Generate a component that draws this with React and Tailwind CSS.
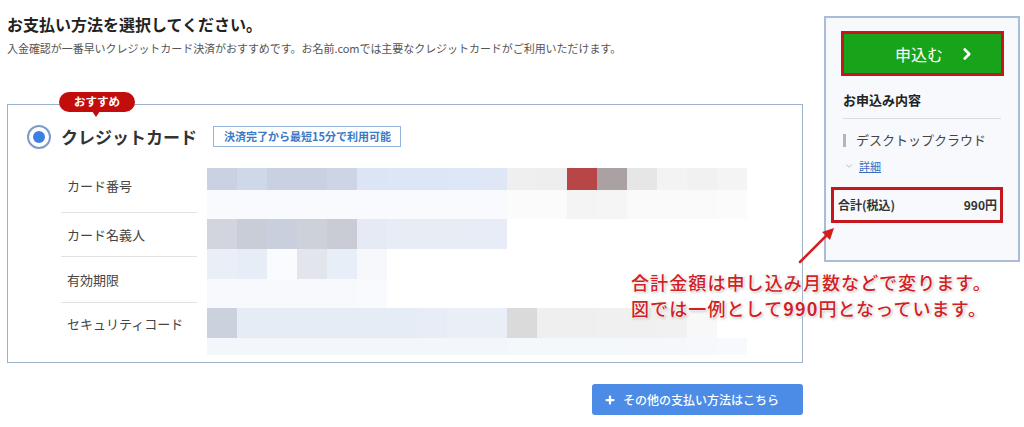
import React from "react";
import { ChevronRight, ChevronDown, Plus } from "lucide-react";

const rowHeights = ["h-[22px]", "h-[29px]", "h-[30px]", "h-[30px]", "h-[29px]", "h-[30px]", "h-[17px]"];

const W = "bg-white";
const mosaic = [
  ["bg-[#c9d1e2]", "bg-[#cfd8e9]", "bg-[#c8d0e2]", "bg-[#c9d0e2]", "bg-[#ccd4e5]", "bg-[#dce5f5]", "bg-[#dde6f6]", "bg-[#dde6f6]", "bg-[#dee7f7]", "bg-[#dfe7f6]", "bg-[#efefef]", "bg-[#eeeeee]", "bg-[#b94646]", "bg-[#aaa2a2]", "bg-[#e6e6e6]", "bg-[#f3f3f3]", "bg-[#f1f1f1]", "bg-[#f4f4f4]"],
  ["bg-[#f9fafd]", "bg-[#f9fafd]", "bg-[#f9fafd]", "bg-[#f9fafd]", "bg-[#f9fafd]", "bg-[#f9fafd]", "bg-[#f9fafd]", "bg-[#f9fafd]", "bg-[#f9fafd]", "bg-[#f9fafd]", "bg-[#fbfbfb]", "bg-[#fbfbfb]", "bg-[#f4f4f4]", "bg-[#f5f5f5]", "bg-[#fafafa]", "bg-[#fafafa]", "bg-[#fafafa]", "bg-[#fbfbfb]"],
  ["bg-[#d2d5de]", "bg-[#c9cdd8]", "bg-[#c9cfdc]", "bg-[#cdd1da]", "bg-[#c9ccd5]", "bg-[#e6eaf4]", "bg-[#e8ecf5]", "bg-[#e8ecf5]", "bg-[#e8ecf5]", "bg-[#e7ecf6]", W, W, W, W, W, W, W, W],
  ["bg-[#eaeef6]", "bg-[#e7edf7]", "bg-[#fafbfe]", "bg-[#e3e5ed]", "bg-[#e8eef7]", "bg-[#f6f8fc]", W, W, W, W, W, W, W, W, W, W, W, W],
  ["bg-[#f7f9fc]", "bg-[#f7f9fc]", "bg-[#f8f9fc]", "bg-[#f8f9fc]", "bg-[#f8f9fc]", "bg-[#f9fafd]", W, W, W, W, W, W, W, W, W, W, W, W],
  ["bg-[#ccd2dd]", "bg-[#e6ecf6]", "bg-[#e6ecf6]", "bg-[#e6ecf6]", "bg-[#e6ecf6]", "bg-[#e6ecf6]", "bg-[#e6ecf6]", "bg-[#e7ecf6]", "bg-[#e9eef7]", "bg-[#e9eef7]", "bg-[#dadada]", "bg-[#efefef]", "bg-[#efefef]", "bg-[#f0f0f0]", "bg-[#f0f0f0]", "bg-[#f1f1f1]", "bg-[#f8f8f8]", W],
  ["bg-[#f3f6fb]", "bg-[#f3f6fb]", "bg-[#f3f6fb]", "bg-[#f3f6fb]", "bg-[#f3f6fb]", "bg-[#f3f6fb]", "bg-[#f3f6fb]", "bg-[#f3f6fb]", "bg-[#f3f6fb]", "bg-[#f3f6fb]", "bg-[#f4f7fb]", "bg-[#f4f7fb]", "bg-[#f4f7fb]", "bg-[#f4f7fb]", "bg-[#f5f7fb]", "bg-[#f5f7fb]", "bg-[#f6f8fb]", "bg-[#f7f9fc]"],
];

const labels = [
  { text: "カード番号", h: "h-[53px]" },
  { text: "カード名義人", h: "h-[44px]" },
  { text: "有効期限", h: "h-[46px]" },
  { text: "セキュリティコード", h: "h-[42px]", last: true },
];

export default function App() {
  return (
    <div className="relative flex w-[1024px] h-[427px] bg-white overflow-hidden font-['Noto_Sans_CJK_JP','Noto_Sans',sans-serif] text-[#333]">
      {/* Left column */}
      <div className="w-[803px] pl-[7px] pt-[12px] flex flex-col">
        <h1 className="text-[16px] leading-[24px] font-bold text-[#222]">お支払い方法を選択してください。</h1>
        <p className="mt-[4px] text-[11px] leading-[16px] text-[#555] tracking-[-0.05px]">
          入金確認が一番早いクレジットカード決済がおすすめです。お名前.comでは主要なクレジットカードがご利用いただけます。
        </p>

        {/* Card */}
        <div className="relative mt-[48px] h-[259px] border border-[#9fb2cc] bg-white pt-[20px]">
          {/* Badge */}
          <div className="absolute left-[51px] top-[-13px] flex h-[20px] w-[76px] items-center justify-center rounded-full bg-[#c30d0d] text-[11.5px] font-bold text-white leading-none">
            おすすめ
            <span className="absolute left-[33px] top-[19px] h-0 w-0 border-x-[4px] border-t-[6px] border-x-transparent border-t-[#c30d0d]"></span>
          </div>

          {/* Header */}
          <div className="flex h-[23px] items-center pl-[19px]">
            <span className="flex h-[24px] w-[24px] items-center justify-center rounded-full border-2 border-[#7c9bcb] bg-white">
              <span className="h-[12px] w-[12px] rounded-full bg-[#3d80e3]"></span>
            </span>
            <span className="ml-[10px] text-[17px] font-bold text-[#333] leading-none">クレジットカード</span>
            <span className="ml-[16px] flex h-[21px] items-center border border-[#93b5de] pl-[10px] pr-[9px] text-[11px] font-bold text-[#3a7ac6] leading-none">
              決済完了から最短15分で利用可能
            </span>
          </div>

          {/* Rows */}
          <div className="mt-[12px] flex pl-[53px]">
            <div className="flex w-[136px] flex-col">
              {labels.map((l) => (
                <div
                  key={l.text}
                  className={`${l.h} flex items-center pl-[6px] text-[13px] text-[#444] ${l.last ? "" : "border-b border-[#e2e2e2]"}`}
                >
                  {l.text}
                </div>
              ))}
            </div>
            <div className="ml-[10px] flex flex-col pt-[8px]">
              {mosaic.map((row, i) => (
                <div key={i} className={`flex ${rowHeights[i]}`}>
                  {row.map((c, j) => (
                    <div key={j} className={`w-[30px] h-full ${c}`}></div>
                  ))}
                </div>
              ))}
            </div>
          </div>
        </div>

        {/* Other payment button */}
        <div className="mt-[21px] flex justify-end">
          <button className="flex h-[31px] w-[211px] items-center rounded-[3px] bg-[#4c8ce6] pl-[12px] text-[12px] font-medium text-white">
            <Plus size={12} strokeWidth={4.5} className="text-white" />
            <span className="ml-[7px] leading-none">その他の支払い方法はこちら</span>
          </button>
        </div>
      </div>

      {/* Right panel */}
      <div className="ml-[21px] mt-[16px] h-[246px] w-[196px] border-2 border-[#a9bcd8] bg-[#f7f9fc] pt-[13px]">
        <div className="px-[15px]">
          <button className="flex h-[45px] w-[163px] items-center justify-center border-[3px] border-[#c4161c] bg-[#17a41b] pl-[26px] text-white">
            <span className="text-[16px] leading-none">申込む</span>
            <ChevronRight size={18} strokeWidth={3.5} className="ml-[15px]" />
          </button>
          <div className="mt-[14px] pl-[2px] text-[13px] font-bold leading-[20px] text-[#222]">お申込み内容</div>
          <div className="mt-[8px] ml-[2px] h-px w-[158px] bg-[#dcdcdc]"></div>
          <div className="mt-[11px] flex items-center pl-[2px] leading-[20px]">
            <span className="h-[13px] w-[3px] bg-[#b5b5b5]"></span>
            <span className="ml-[10px] text-[13px] text-[#444]">デスクトップクラウド</span>
          </div>
          <div className="mt-[8px] flex items-center pl-[3px] leading-[16px]">
            <ChevronDown size={10} strokeWidth={1.5} className="text-[#999]" />
            <span className="ml-[5px] text-[11px] text-[#3b6fc4] underline">詳細</span>
          </div>
        </div>
        <div className="mt-[13px] ml-[5px] flex h-[36px] w-[172px] items-center justify-between border-[3px] border-[#c4161c] pl-[4px] pr-[3px] text-[12px] font-semibold text-[#333]">
          <span>合計(税込)</span>
          <span>990円</span>
        </div>
      </div>

      {/* Arrow annotation */}
      <svg className="absolute left-[795px] top-[222px]" width="45" height="45" viewBox="0 0 45 45">
        <line x1="5" y1="40" x2="32" y2="13" stroke="#d41f1f" strokeWidth="2.5" strokeLinecap="round" />
        <polygon points="39,6 35,18 27,10" fill="#d41f1f" />
      </svg>

      <div className="absolute left-[631px] top-[269px] text-[18px] leading-[26px] tracking-[1.1px] font-medium text-[#d11f26] [text-shadow:0_0_2px_#fff,0_0_2px_#fff,0_0_3px_#fff,1px_1px_3px_#999]">
        <div>合計金額は申し込み月数などで変ります。</div>
        <div>
          図では一例として<span className="font-bold">990</span>円となっています。
        </div>
      </div>
    </div>
  );
}
